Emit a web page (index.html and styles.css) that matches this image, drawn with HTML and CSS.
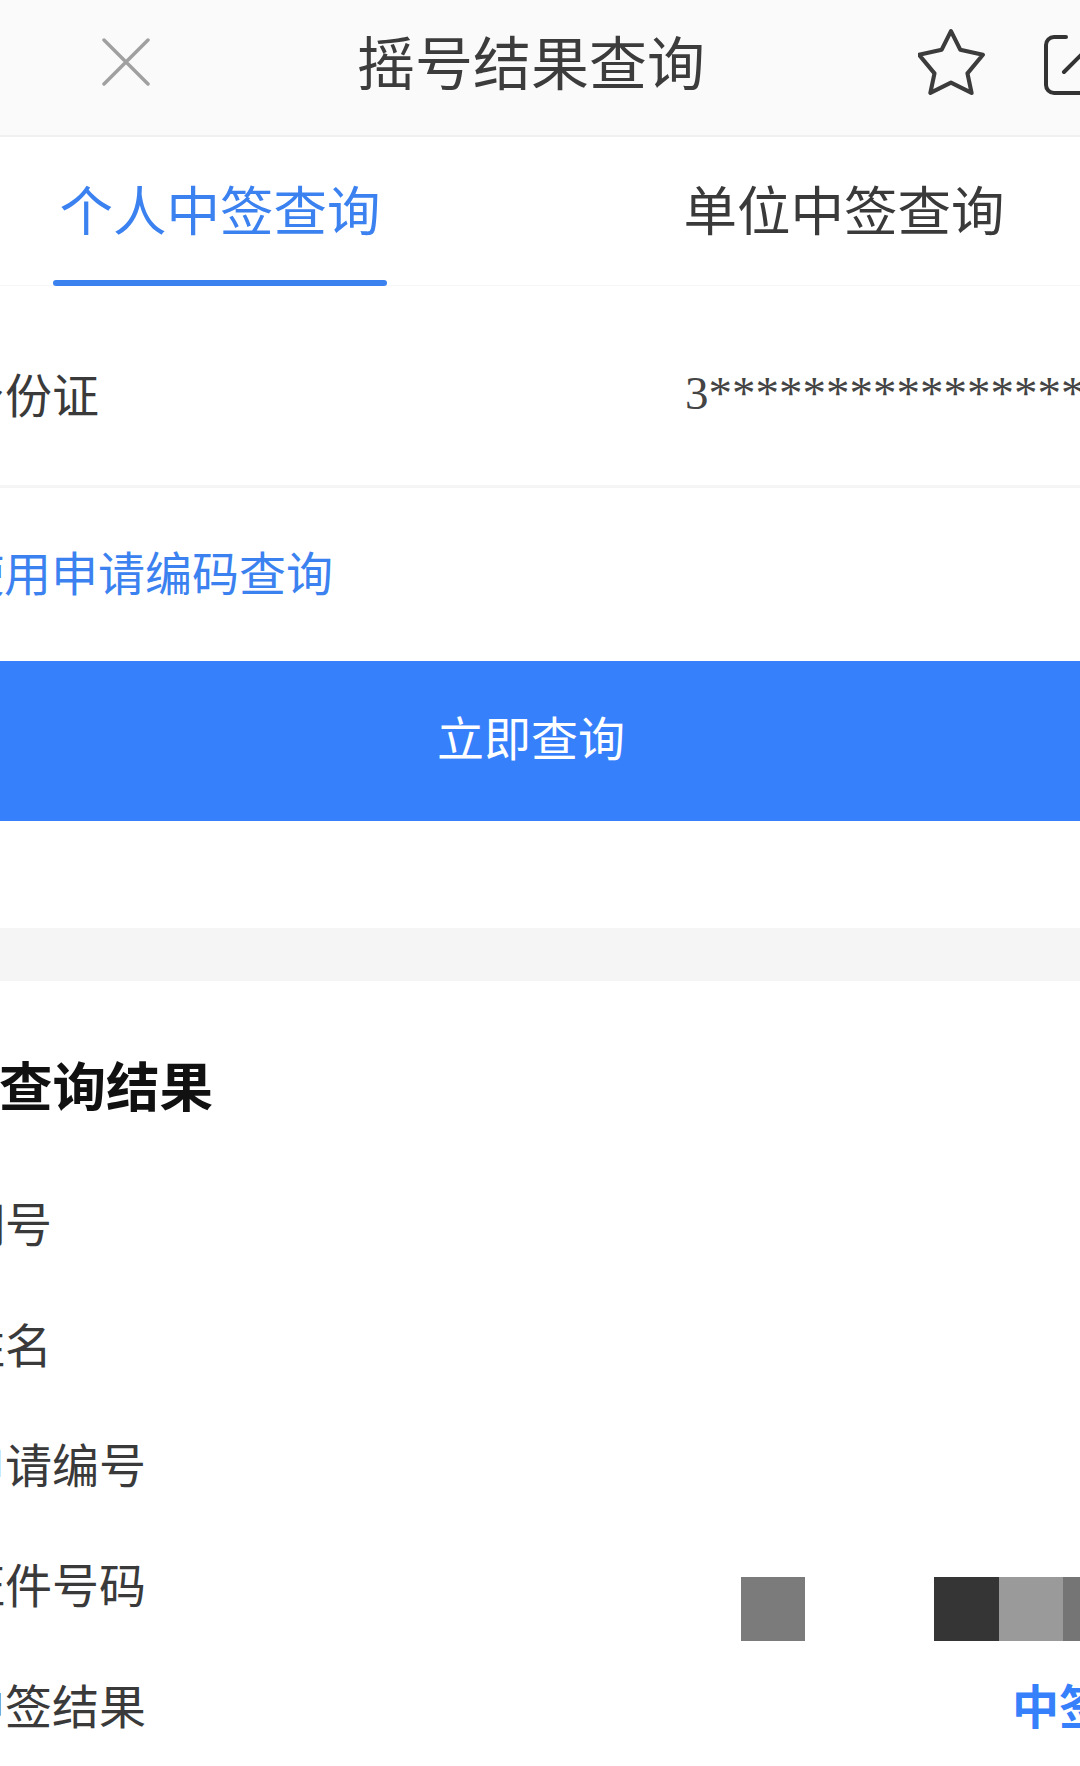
FILE: index.html
```html
<!DOCTYPE html>
<html lang="zh-CN">
<head>
<meta charset="utf-8">
<title>摇号结果查询</title>
<link rel="stylesheet" href="styles.css">
</head>
<body>
<div class="page">
  <header class="nav">
    <div class="nav-left">
      <svg class="icon-close" viewBox="0 0 48 48"><path d="M2 2L46 46M46 2L2 46"/></svg>
    </div>
    <div class="nav-title">摇号结果查询</div>
    <div class="nav-right">
      <svg class="icon-star" viewBox="0 0 66 66"><path d="M32 3L41 21L63 26L48 44L52 63L32 53L12 63L16 44L1 26L23 21Z"/></svg>
      <svg class="icon-share" viewBox="0 0 60 60"><path d="M22 2H10a8 8 0 0 0-8 8v40a8 8 0 0 0 8 8h42a8 8 0 0 0 6-8V34M20 37L55 2"/></svg>
    </div>
  </header>
  <nav class="tabs">
    <div class="tab tab-active">个人中签查询</div>
    <div class="tab">单位中签查询</div>
  </nav>
  <div class="row row-id">
    <span>身份证</span>
    <span class="id-value">3*****************</span>
  </div>
  <div class="link-row">使用申请编码查询</div>
  <div class="query-btn">立即查询</div>
  <div class="divider"></div>
  <h2 class="result-title">查询结果</h2>
  <div class="row row-result"><span>期号</span></div>
  <div class="row row-result"><span>姓名</span></div>
  <div class="row row-result"><span>申请编号</span></div>
  <div class="row row-result">
    <span>证件号码</span>
    <div class="mosaic">
      <i class="px px1"></i><i class="px"></i><i class="px"></i><i class="px px2"></i><i class="px px3"></i><i class="px px4"></i>
    </div>
  </div>
  <div class="row row-result"><span>中签结果</span><span class="win">中签</span></div>
</div>
</body>
</html>
```
FILE: styles.css
```css
html, body {
  margin: 0;
  padding: 0;
  background: #fff;
  overflow: hidden;
  height: 1766px;
}
.page {
  width: 1192px;
  margin-left: -65px;
  font-family: "Noto Sans CJK SC", "Noto Sans", sans-serif;
  color: #3a3a3a;
}
.nav {
  height: 121px;
  padding-bottom: 14px;
  background: #fafafa;
  border-bottom: 2px solid #f0f0f0;
  display: grid;
  grid-template-columns: 1fr auto 1fr;
  align-items: center;
}
.nav-left {
  padding-left: 167px;
  margin-top: 2px;
  display: flex;
}
.icon-close {
  width: 48px;
  height: 48px;
  fill: none;
  stroke: #a0a0a0;
  stroke-width: 3.5;
  stroke-linecap: round;
}
.nav-title {
  font-size: 58px;
  line-height: 70px;
  margin-bottom: 2px;
  color: #3c3c3c;
}
.nav-right {
  display: flex;
  justify-content: flex-end;
  align-items: center;
  gap: 58px;
  padding-right: 23px;
}
.icon-star {
  width: 68px;
  height: 68px;
  margin-top: 2px;
  fill: none;
  stroke: #3c3c3c;
  stroke-width: 4;
  stroke-linejoin: round;
}
.icon-share {
  width: 60px;
  height: 60px;
  margin-top: 8px;
  fill: none;
  stroke: #333;
  stroke-width: 4;
  stroke-linecap: round;
}
.tabs {
  height: 148px;
  border-bottom: 1px solid #f7f7f7;
  display: flex;
  gap: 290px;
  padding-left: 118px;
}
.tab {
  position: relative;
  width: 334px;
  height: 149px;
  box-sizing: border-box;
  padding-top: 40px;
  font-size: 53.5px;
  line-height: 62px;
  text-align: center;
}
.tab-active {
  color: #3b82f0;
}
.tab-active::after {
  content: "";
  position: absolute;
  left: 0;
  right: 0;
  bottom: 0;
  height: 6px;
  border-radius: 3px;
  background: #3b82f0;
}
.row {
  display: flex;
  justify-content: space-between;
  align-items: center;
  padding-left: 23px;
  font-size: 47px;
  line-height: 56px;
  white-space: nowrap;
}
.row-id {
  height: 185px;
  padding-top: 14px;
  border-bottom: 3px solid #f5f5f5;
}
.id-value {
  font-family: "Liberation Serif", serif;
  font-size: 47px;
  margin-right: 19px;
  color: #444;
}
.link-row {
  height: 172px;
  box-sizing: border-box;
  padding: 55px 0 0 22px;
  font-size: 47px;
  line-height: 56px;
  color: #3b82f0;
}
.query-btn {
  height: 160px;
  margin-top: 1px;
  background: #3780fb;
  color: #fff;
  font-size: 47px;
  line-height: 149px;
  text-align: center;
}
.divider {
  height: 53px;
  margin-top: 107px;
  background: #f5f5f5;
}
.result-title {
  margin: 0;
  padding: 77px 0 55px 64px;
  font-size: 53.5px;
  line-height: 52px;
  font-weight: 700;
  color: #111;
}
.row-result {
  height: 120.4px;
  box-sizing: border-box;
  padding-bottom: 6px;
}
.mosaic {
  display: flex;
  margin-top: 52px;
  margin-right: 19px;
}
.px {
  display: block;
  width: 64.5px;
  height: 64px;
}
.px1 { background: #7b7b7b; }
.px2 { background: #353535; }
.px3 { background: #9a9a9a; }
.px4 { background: #757575; width: 45px; }
.win {
  font-weight: 700;
  color: #3780fb;
  margin-right: 21px;
}
```
